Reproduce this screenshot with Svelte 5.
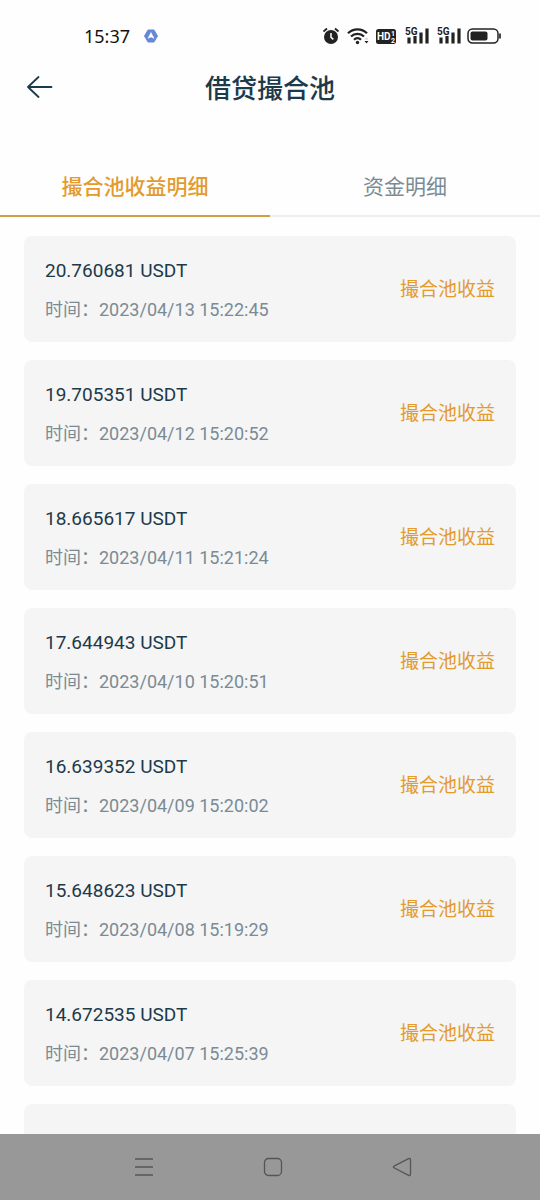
<script lang="ts">
	interface Income {
		amount: string;
		time: string;
	}

	const tabs = ['撮合池收益明细', '资金明细'];
	let active = $state(0);

	const records: Income[] = [
		{ amount: '20.760681', time: '2023/04/13 15:22:45' },
		{ amount: '19.705351', time: '2023/04/12 15:20:52' },
		{ amount: '18.665617', time: '2023/04/11 15:21:24' },
		{ amount: '17.644943', time: '2023/04/10 15:20:51' },
		{ amount: '16.639352', time: '2023/04/09 15:20:02' },
		{ amount: '15.648623', time: '2023/04/08 15:19:29' },
		{ amount: '14.672535', time: '2023/04/07 15:25:39' }
	];
</script>

{#snippet signal()}
	<svg width="26" height="20" viewBox="0 0 26 20" aria-hidden="true">
		<text x="2" y="9" class="signal-text">5G</text>
		<path d="M6 11.5v6M12 10v7.5M18 6.5v11M24 2.5v15" stroke="#222" stroke-width="3.2" />
	</svg>
{/snippet}

<div class="screen">
	<div class="status">
		<span class="clock">15:37</span>
		<svg width="14" height="14" viewBox="0 0 14 14" aria-hidden="true">
			<path
				d="M4 1h6l3.5 6L10 13H4L.5 7z"
				fill="#6688d8"
				stroke="#6688d8"
				stroke-linejoin="round"
			/>
			<path d="M7 3l3.5 6.8L7 8.2 3.5 9.8z" fill="#fff" />
		</svg>

		<div class="status-right">
			<svg width="18" height="20" viewBox="0 0 18 20" aria-hidden="true">
				<circle cx="8" cy="11" r="7" fill="#222" />
				<path d="M.5 5.5L4 2.5M15.5 5.5L12 2.5" stroke="#222" stroke-width="1.8" />
				<path d="M8 7v4.3l2.4 2" fill="none" stroke="#fff" stroke-width="1.5" />
			</svg>
			<svg width="23" height="20" viewBox="0 0 23 20" aria-hidden="true">
				<g fill="none" stroke="#222" stroke-width="2.3">
					<path d="M1 7.2a13.5 13.5 0 0 1 19 0" />
					<path d="M4 10.5a9.2 9.2 0 0 1 13 0" />
					<path d="M7 13.7a5 5 0 0 1 7 0" />
				</g>
				<circle cx="10.5" cy="16.5" r="1.7" fill="#222" />
				<path d="M17.5 15h4l-2 2.5z" fill="#222" />
				<path d="M17.5 13.5h4l-2-2z" fill="#ccc" />
			</svg>
			<svg width="21" height="20" viewBox="0 0 21 20" aria-hidden="true">
				<rect y="3" width="20" height="15" rx="2.5" fill="#222" />
				<text x="1" y="14" class="hd-text">HD</text>
				<text x="15" y="10" class="hd-index">1</text>
				<text x="15" y="17" class="hd-index">2</text>
			</svg>
			{@render signal()}
			{@render signal()}
			<svg width="35" height="20" viewBox="0 0 35 20" aria-hidden="true">
				<rect x="1" y="3" width="30" height="14" rx="4.5" fill="none" stroke="#222" stroke-width="1.5" />
				<rect x="3.5" y="5.5" width="17" height="9" rx="2" fill="#222" />
				<path d="M33 7.5v5" stroke="#444" stroke-width="2" />
			</svg>
		</div>
	</div>

	<header>
		<button class="back" aria-label="返回">
			<svg width="28" height="24" viewBox="0 0 28 24" aria-hidden="true">
				<path
					d="M12.5 1L2 11l10.5 10M2 11h23.5"
					fill="none"
					stroke="#1d3a4a"
					stroke-width="1.8"
					stroke-linecap="round"
					stroke-linejoin="round"
				/>
			</svg>
		</button>
		<h1>借贷撮合池</h1>
	</header>

	<nav class="tabs">
		{#each tabs as tab, i}
			<button class="tab" class:active={active === i} onclick={() => (active = i)}>{tab}</button>
		{/each}
	</nav>

	<main>
		<ul>
			{#each records as record}
				<li class="card">
					<div>
						<p class="amount">{record.amount} USDT</p>
						<p class="time">时间：{record.time}</p>
					</div>
					<span class="kind">撮合池收益</span>
				</li>
			{/each}
			<li class="card"></li>
		</ul>
	</main>

	<div class="system-bar">
		<button aria-label="菜单">
			<svg width="20" height="20" viewBox="0 0 20 20" aria-hidden="true">
				<path d="M1 2h18M1 10h18M1 18h18" stroke="#555" stroke-width="1.6" />
			</svg>
		</button>
		<button aria-label="主页">
			<svg width="20" height="20" viewBox="0 0 20 20" aria-hidden="true">
				<rect x="1.5" y="1.5" width="17" height="17" rx="4" fill="none" stroke="#555" stroke-width="1.3" />
			</svg>
		</button>
		<button aria-label="后退">
			<svg width="20" height="20" viewBox="0 0 20 20" aria-hidden="true">
				<path
					d="M2 9.2L16.6 1.7q1.9-.7 1.9 1.2v14.2q0 1.9-1.9 1.2L2 10.8q-1.3-.8 0-1.6z"
					fill="none"
					stroke="#555"
					stroke-width="1.3"
				/>
			</svg>
		</button>
	</div>
</div>

<style>
	:global(body) {
		margin: 0;
		background: #fefefe;
	}

	.screen {
		display: flex;
		flex-direction: column;
		height: 100vh;
		overflow: hidden;
		font-family: Roboto, 'Noto Sans CJK SC', sans-serif;
		color: #1d3a4a;
	}

	button {
		padding: 0;
		border: 0;
		background: none;
		font: inherit;
		color: inherit;
		cursor: pointer;
	}

	svg {
		display: block;
		flex: none;
	}

	h1,
	p,
	ul {
		margin: 0;
		padding: 0;
	}

	.status {
		display: flex;
		align-items: center;
		gap: 14px;
		flex: none;
		height: 56px;
		box-sizing: border-box;
		padding: 16px 38px 0 84px;
	}

	.clock {
		font-family: 'Noto Sans', sans-serif;
		font-size: 18px;
		color: #111;
	}

	.status-right {
		display: flex;
		gap: 6px;
		margin-left: auto;
	}

	.signal-text {
		font: 700 10px Roboto, sans-serif;
		fill: #222;
	}

	.hd-text {
		font: 700 10px Roboto, sans-serif;
		fill: #fff;
	}

	.hd-index {
		font: 700 7px Roboto, sans-serif;
		fill: #fff;
	}

	header {
		display: grid;
		grid-template-columns: 28px 1fr 28px;
		align-items: center;
		flex: none;
		height: 64px;
		padding: 0 26px;
	}

	h1 {
		padding-top: 2px;
		font-size: 26px;
		line-height: 38px;
		font-weight: 500;
		text-align: center;
	}

	.tabs {
		display: flex;
		flex: none;
		margin-top: 36px;
	}

	.tab {
		flex: 1;
		height: 61px;
		padding-bottom: 2px;
		border-bottom: 2px solid #ededed;
		font-size: 21px;
		color: #7a8b95;
	}

	.tab.active {
		border-color: #d0a040;
		font-weight: 500;
		color: #e39b2d;
	}

	main {
		flex: 1;
		min-height: 0;
		overflow: hidden;
	}

	ul {
		display: flex;
		flex-direction: column;
		gap: 18px;
		padding: 19px 24px;
		list-style: none;
	}

	.card {
		display: flex;
		align-items: center;
		justify-content: space-between;
		box-sizing: border-box;
		min-height: 106px;
		padding: 21px 21px 19px;
		border-radius: 8px;
		background: #f5f5f5;
	}

	.amount {
		margin-bottom: 12px;
		font-size: 19px;
		line-height: 28px;
	}

	.time {
		font-size: 18px;
		line-height: 26px;
		color: #7a8b95;
	}

	.kind {
		font-size: 19px;
		line-height: 28px;
		color: #e39b2d;
	}

	.system-bar {
		display: flex;
		align-items: center;
		justify-content: center;
		gap: 109px;
		flex: none;
		height: 66px;
		padding-left: 6px;
		background: #989898;
	}
</style>
